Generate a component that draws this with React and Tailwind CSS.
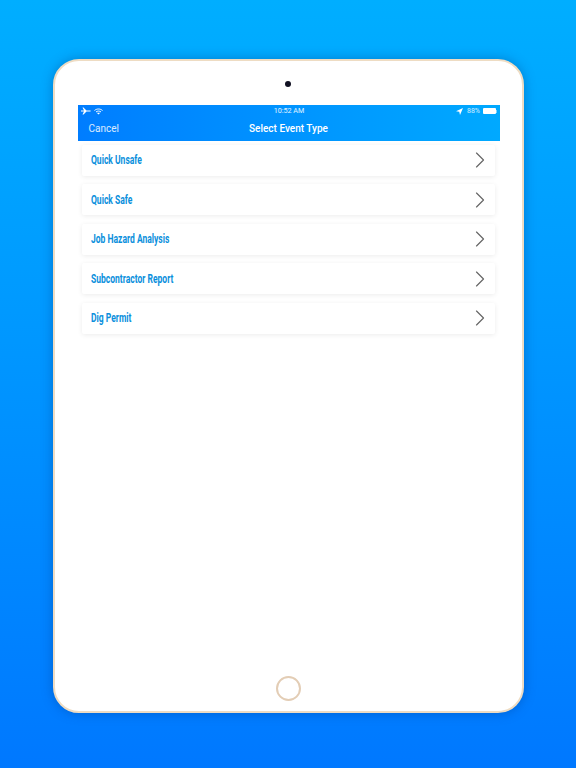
import React from 'react';
import { ChevronRight } from 'lucide-react';

const eventTypes = ['Quick Unsafe', 'Quick Safe', 'Job Hazard Analysis', 'Subcontractor Report', 'Dig Permit'];

const StatusBar = () => (
  <div className="flex h-[13px] items-center justify-between px-[3px] text-[7px] leading-none text-white/80">
    <div className="flex w-[60px] items-center gap-[3px]">
      <svg width="10" height="8" viewBox="0 0 20 16" fill="white">
        <path d="M0 7h6L3 1h2l6 6h6c1.500 0 3 .5 3 1s-1.500 1-3 1h-6l-6 6H3l3-6H0l-0 -2z" />
      </svg>
      <svg width="9" height="7" viewBox="0 0 18 14" fill="none" stroke="white" strokeWidth="2">
        <path d="M1 5c4.500-4 11.500-4 16 0M4 8c3-2.500 7-2.500 10 0" />
        <path d="M9 13l3-3c-2-1-4-1-6 0z" fill="white" stroke="none" />
      </svg>
    </div>
    <span className="pl-[1px] text-[7.200px] text-white/90">10:52 AM</span>
    <div className="flex w-[60px] items-center justify-end gap-[2.500px]">
      <svg width="7" height="7" viewBox="0 0 14 14" fill="white" className="mr-[2px]">
        <path d="M14 0L0 6.500l6.500 1L8 14z" />
      </svg>
      <span>88%</span>
      <div className="flex items-center">
        <div className="h-[6px] w-[13px] rounded-[1px] bg-white" />
        <div className="h-[3px] w-[1px] bg-white/50" />
      </div>
    </div>
  </div>
);

const App = () => {
  return (
    <div className="flex h-[768px] w-[576px] justify-center overflow-hidden bg-gradient-to-b from-[#00aeff] to-[#0078ff] pl-[1px] pt-[59px] font-['Roboto',sans-serif]">
      <div className="flex h-[654px] w-[471px] flex-col rounded-[26px] border-[2.500px] border-[#eedcc3] bg-white shadow-[0_0_12px_rgba(0,50,120,0.35)]">
        {/* Camera */}
        <div className="flex h-[43.500px] items-start justify-center pr-[1px] pt-[20px]">
          <div className="h-[6px] w-[6px] rounded-full bg-[#111122]" />
        </div>

        <div className="mx-[22.500px] flex flex-1 flex-col">
          {/* Header */}
          <div className="h-[36px] bg-gradient-to-r from-[#007dff] to-[#00a9ff]">
            <StatusBar />
            <div className="relative -top-[1px] flex h-[23px] items-center justify-center">
              <span className="absolute left-[11px] text-[10px] text-white/85">Cancel</span>
              <span className="text-[10px] font-medium text-white">Select Event Type</span>
            </div>
          </div>

          {/* Event list */}
          <div className="flex flex-col gap-[8.500px] pl-[4px] pr-[5px] pt-[4px]">
            {eventTypes.map((name) => (
              <div
                key={name}
                className="flex h-[31px] items-center justify-between rounded-[2px] bg-white pl-[9px] pr-[1px] shadow-[0_1px_5px_rgba(0,0,0,0.08)]"
              >
                <span className="origin-left scale-x-[0.71] whitespace-nowrap text-[12px] font-bold text-[#0a8fdc]">{name}</span>
                <ChevronRight size={28} strokeWidth={1} className="shrink-0 text-[#666666]" />
              </div>
            ))}
          </div>
        </div>

        {/* Home button */}
        <div className="flex h-[49.500px] items-start justify-center pt-[14px]">
          <div className="h-[25px] w-[25px] rounded-full border-2 border-[#e3cdb5]" />
        </div>
      </div>
    </div>
  );
};

export default App;
